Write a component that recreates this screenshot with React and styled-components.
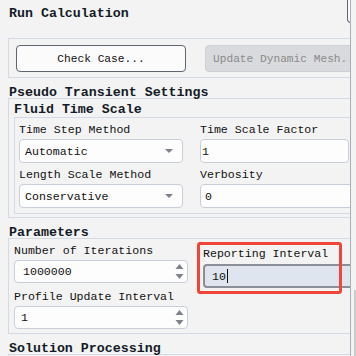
import React from "react";
import styled, { createGlobalStyle } from "styled-components";

const GlobalStyle = createGlobalStyle`
  html, body {
    margin: 0;
    padding: 0;
    background: #f3f3f3;
  }
  body {
    font-family: "Liberation Mono", "DejaVu Sans Mono", monospace;
    color: #1e1e1e;
  }
`;

function App() {
  return (
    <Frame>
      <GlobalStyle />
      <Viewport>
        <Content>
          <TopBar>
            <PageTitle>Run Calculation</PageTitle>
            <StubButton />
          </TopBar>

          <ButtonPanel>
            <Button>Check Case...</Button>
            <Button disabled>Update Dynamic Mesh...</Button>
          </ButtonPanel>

          <SectionTitle>Pseudo Transient Settings</SectionTitle>
          <Group $pad="0 0 3px 5px">
            <SubTitle>Fluid Time Scale</SubTitle>
            <InnerBox>
              <FieldGrid $col={164} $gap={17} $rowGap={4}>
                <Field>
                  <Label>Time Step Method</Label>
                  <Select value="Automatic" />
                </Field>
                <Field>
                  <Label>Time Scale Factor</Label>
                  <TextBox $w={149} $pad={1}>1</TextBox>
                </Field>
                <Field>
                  <Label>Length Scale Method</Label>
                  <Select value="Conservative" />
                </Field>
                <Field>
                  <Label>Verbosity</Label>
                  <TextBox $w={200} $pad={4}>0</TextBox>
                </Field>
              </FieldGrid>
            </InnerBox>
          </Group>

          <SectionTitle>Parameters</SectionTitle>
          <Group $pad="4px 0 4px 5px">
            <FieldGrid $col={174} $gap={15} $rowGap={6}>
              <Field>
                <Label>Number of Iterations</Label>
                <Spin value="1000000" />
              </Field>
              <Field $top={3} $gap={2} $h={40}>
                <Label>Reporting Interval</Label>
                <ActiveBox>
                  10<Caret />
                </ActiveBox>
                <Highlight />
              </Field>
              <Field>
                <Label>Profile Update Interval</Label>
                <Spin value="1" pad={6} />
              </Field>
              <div />
            </FieldGrid>
          </Group>

          <SectionTitle>Solution Processing</SectionTitle>
          <Group $pad="0" style={{ height: 20 }} />
        </Content>
      </Viewport>
      <ScrollStrip>
        <Thumb />
      </ScrollStrip>
    </Frame>
  );
}

function Select({ value }) {
  return (
    <SelectBox>
      <span>{value}</span>
      <svg width="8" height="4" viewBox="0 0 8 4">
        <path d="M0 0 H8 L4 4 Z" fill="#7d828a" />
      </svg>
    </SelectBox>
  );
}

function Spin({ value, pad = 8 }) {
  return (
    <SpinBox $pad={pad}>
      <span>{value}</span>
      <svg width="9" height="17" viewBox="0 0 9 17">
        <path d="M0.5 6 L4.5 1 L8.5 6 Z" fill="#7d828a" />
        <path d="M0.5 11 L4.5 16 L8.5 11 Z" fill="#7d828a" />
      </svg>
    </SpinBox>
  );
}

export default App;

const Frame = styled.div`
  display: flex;
  width: 356px;
  height: 356px;
  overflow: hidden;
  background: #f3f3f3;
`;

const Viewport = styled.div`
  flex: none;
  width: 350px;
  height: 356px;
  overflow: hidden;
  border-right: 1px solid #a9adb5;
`;

const Content = styled.div`
  width: 380px;
`;

const TopBar = styled.div`
  display: flex;
  height: 38px;
`;

const PageTitle = styled.div`
  flex: 1;
  padding: 6px 0 0 9px;
  font-size: 13.3px;
  font-weight: bold;
  line-height: 16px;
  color: #141b27;
`;

const StubButton = styled.div`
  width: 33px;
  height: 23px;
  box-sizing: border-box;
  border: 1px solid #5f6670;
  border-top: none;
  border-radius: 0 0 0 4px;
  background: #fafafa;
`;

const ButtonPanel = styled.div`
  display: flex;
  gap: 19px;
  margin-left: 8px;
  padding: 6px 7px 5px;
  border: 1px solid #d3d9e5;
`;

const Button = styled.div`
  flex: none;
  width: 170px;
  height: 27px;
  box-sizing: border-box;
  display: flex;
  align-items: center;
  justify-content: ${(p) => (p.disabled ? "flex-start" : "center")};
  padding: 0 ${(p) => (p.disabled ? "7px" : "0")};
  border: 1px solid ${(p) => (p.disabled ? "#cdd0d5" : "#5e6570")};
  border-radius: 4px;
  background: ${(p) => (p.disabled ? "#d9dadd" : "#fbfbfb")};
  color: ${(p) => (p.disabled ? "#8a8a8a" : "#111")};
  font-size: 11.2px;
  white-space: nowrap;
`;

const SectionTitle = styled.div`
  height: 20px;
  box-sizing: border-box;
  padding: 7px 0 0 9px;
  font-size: 13.3px;
  font-weight: bold;
  line-height: 16px;
  color: #141b27;
  white-space: nowrap;
`;

const SubTitle = styled.div`
  height: 18px;
  box-sizing: border-box;
  padding-top: 3px;
  font-size: 13.3px;
  font-weight: bold;
  line-height: 16px;
  color: #141b27;
`;

const Group = styled.div`
  margin-left: 8px;
  border: 1px solid #d3d9e5;
  padding: ${(p) => p.$pad};
`;

const InnerBox = styled.div`
  border: 1px solid #d3d9e5;
  padding: 4px 0 5px 4px;
`;

const FieldGrid = styled.div`
  display: grid;
  grid-template-columns: ${(p) => p.$col}px 1fr;
  column-gap: ${(p) => p.$gap}px;
  row-gap: ${(p) => p.$rowGap}px;
`;

const Field = styled.div`
  position: relative;
  display: flex;
  flex-direction: column;
  gap: ${(p) => p.$gap ?? 1}px;
  padding-top: ${(p) => p.$top ?? 0}px;
  height: ${(p) => (p.$h ? `${p.$h}px` : "auto")};
  box-sizing: border-box;
`;

const Label = styled.div`
  flex: none;
  height: 16px;
  font-size: 11.6px;
  line-height: 16px;
  color: #111;
  white-space: nowrap;
`;

const SelectBox = styled.div`
  flex: none;
  height: 24px;
  box-sizing: border-box;
  display: flex;
  align-items: center;
  justify-content: space-between;
  padding: 0 9px 0 5px;
  border: 1px solid #c9cfd9;
  border-radius: 4px;
  background: #fdfdfd;
  font-size: 11.6px;
  color: #111;
`;

const TextBox = styled.div`
  flex: none;
  width: ${(p) => p.$w}px;
  height: 24px;
  box-sizing: border-box;
  display: flex;
  align-items: center;
  padding-left: ${(p) => p.$pad}px;
  border: 1px solid #c9cfd9;
  border-radius: 4px;
  background: #fdfdfd;
  font-size: 11.6px;
  color: #111;
`;

const SpinBox = styled.div`
  flex: none;
  height: 23px;
  box-sizing: border-box;
  display: flex;
  align-items: center;
  justify-content: space-between;
  padding: 0 3px 0 ${(p) => p.$pad}px;
  border: 1px solid #c9cfd9;
  border-radius: 4px;
  background: #fdfdfd;
  font-size: 11.6px;
  color: #111;
`;

const ActiveBox = styled.div`
  flex: none;
  width: 200px;
  height: 24px;
  box-sizing: border-box;
  display: flex;
  align-items: center;
  padding-left: 7px;
  border: 2px solid #8b9098;
  border-radius: 4px;
  background: #dfe5ee;
  font-size: 11.6px;
  color: #111;
`;

const Caret = styled.span`
  display: inline-block;
  width: 1px;
  height: 14px;
  margin-left: 1px;
  background: #111;
`;

const Highlight = styled.div`
  position: absolute;
  left: -6px;
  top: -1px;
  width: 145px;
  height: 52px;
  box-sizing: border-box;
  border: 3px solid #f0463a;
  border-radius: 3px;
  pointer-events: none;
`;

const ScrollStrip = styled.div`
  flex: 1;
  background: #f3f3f3;
`;

const Thumb = styled.div`
  width: 2px;
  height: 66px;
  margin: 290px 0 0 3px;
  background: #cacaca;
`;
